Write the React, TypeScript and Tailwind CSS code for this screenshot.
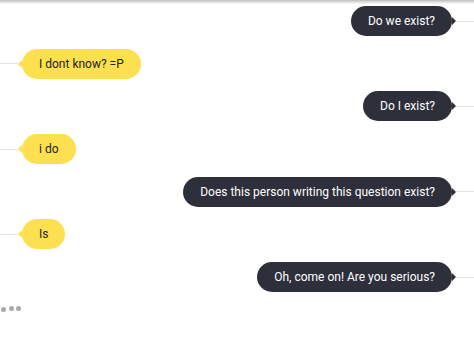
import React from "react";

type Msg = { from: "bot" | "me"; text: string };

const MESSAGES: Msg[] = [
  { from: "me", text: "Do we exist?" },
  { from: "bot", text: "I dont know? =P" },
  { from: "me", text: "Do I exist?" },
  { from: "bot", text: "i do" },
  { from: "me", text: "Does this person writing this question exist?" },
  { from: "bot", text: "Is" },
  { from: "me", text: "Oh, come on! Are you serious?" },
];

function Bubble({ from, text }: Msg) {
  if (from === "me") {
    return (
      <div className="flex items-center justify-end">
        <div className="flex h-[30px] items-center rounded-full bg-[#2d2f3a] px-[17px] text-[12px] text-white">
          {text}
        </div>
        <span className="h-0 w-0 border-y-[4px] border-l-[4px] border-y-transparent border-l-[#2d2f3a]" />
        <span className="h-px w-[18px] bg-[#e3e3e3]" />
      </div>
    );
  }
  return (
    <div className="flex items-center">
      <span className="h-px w-[18px] bg-[#e3e3e3]" />
      <span className="h-0 w-0 border-y-[4px] border-r-[4px] border-y-transparent border-r-[#fde04f]" />
      <div className="flex h-[30px] items-center rounded-full bg-[#fde04f] px-[17px] text-[12px] text-[#222]">
        {text}
      </div>
    </div>
  );
}

export default function App() {
  return (
    <div className="h-[347px] w-[474px] overflow-hidden bg-white" style={{ fontFamily: "Roboto, sans-serif" }}>
      <div className="h-[4px] bg-gradient-to-b from-[#bdbdbd] to-white" />
      <div className="flex flex-col gap-[12.7px] pt-[2px]">
        {MESSAGES.map((m, i) => (
          <Bubble key={i} {...m} />
        ))}
      </div>
      <div className="mt-[13px] flex items-center gap-[2.5px] pl-[1px]">
        <span className="mt-[2px] h-[5px] w-[5px] rounded-full bg-[#a8a8a8]" />
        <span className="h-[5px] w-[5px] rounded-full bg-[#a8a8a8]" />
        <span className="h-[5px] w-[5px] rounded-full bg-[#a8a8a8]" />
      </div>
    </div>
  );
}
